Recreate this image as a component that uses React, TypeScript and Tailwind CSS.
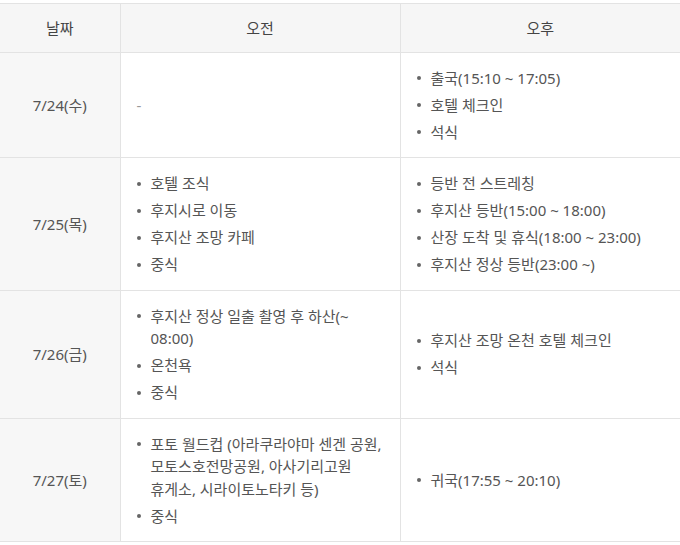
import React from "react";

type Row = { date: string; am: string[] | null; pm: string[] };

const rows: Row[] = [
  { date: "7/24(수)", am: null, pm: ["출국(15:10 ~ 17:05)", "호텔 체크인", "석식"] },
  {
    date: "7/25(목)",
    am: ["호텔 조식", "후지시로 이동", "후지산 조망 카페", "중식"],
    pm: ["등반 전 스트레칭", "후지산 등반(15:00 ~ 18:00)", "산장 도착 및 휴식(18:00 ~ 23:00)", "후지산 정상 등반(23:00 ~)"],
  },
  {
    date: "7/26(금)",
    am: ["후지산 정상 일출 촬영 후 하산(~ 08:00)", "온천욕", "중식"],
    pm: ["후지산 조망 온천 호텔 체크인", "석식"],
  },
  {
    date: "7/27(토)",
    am: ["포토 월드컵 (아라쿠라야마 센겐 공원, 모토스호전망공원, 아사기리고원 휴게소, 시라이토노타키 등)", "중식"],
    pm: ["귀국(17:55 ~ 20:10)"],
  },
];

function List({ items }: { items: string[] }) {
  return (
    <ul className="flex flex-col gap-[4.5px]">
      {items.map((t, i) => (
        <li key={i} className="flex items-start">
          <span className="mt-[9.5px] mr-[10px] h-[4px] w-[4px] shrink-0 rounded-full bg-[#666]" />
          <span className="break-keep">{t}</span>
        </li>
      ))}
    </ul>
  );
}

export default function App() {
  return (
    <div
      className="w-[680px] bg-white pt-[3px] text-[15px] leading-[22.5px] text-[#555]"
      style={{ fontFamily: '"Noto Sans", "Noto Sans CJK KR", sans-serif' }}
    >
      <table className="w-[680px] table-fixed border-collapse">
        <colgroup>
          <col className="w-[120px]" />
          <col className="w-[280px]" />
          <col className="w-[280px]" />
        </colgroup>
        <thead>
          <tr className="bg-[#f6f6f6]">
            <th className="border-t border-b border-r border-[#e3e3e3] py-[12.5px] text-center font-normal text-[#444]">날짜</th>
            <th className="border-t border-b border-r border-[#e3e3e3] py-[12.5px] text-center font-normal text-[#444]">오전</th>
            <th className="border-t border-b border-[#e3e3e3] py-[12.5px] text-center font-normal text-[#444]">오후</th>
          </tr>
        </thead>
        <tbody>
          {rows.map((r, i) => (
            <tr key={i}>
              <td className="border-b border-r border-[#e3e3e3] bg-[#f7f7f7] text-center align-middle">{r.date}</td>
              <td className="border-b border-r border-[#e3e3e3] py-[14px] pl-[16px] pr-[16px] align-middle">
                {r.am ? <List items={r.am} /> : <span className="text-[#999]">-</span>}
              </td>
              <td className="border-b border-[#e3e3e3] py-[14px] pl-[16px] pr-[16px] align-middle">
                <List items={r.pm} />
              </td>
            </tr>
          ))}
        </tbody>
      </table>
    </div>
  );
}
